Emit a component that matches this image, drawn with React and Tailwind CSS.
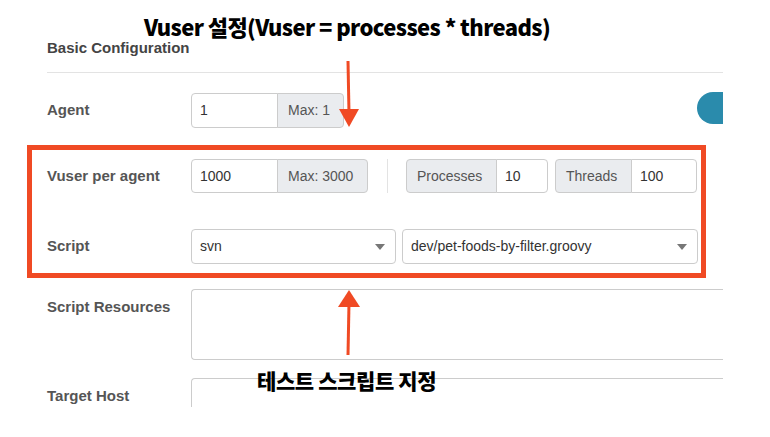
import React from 'react';

const label = 'w-[144px] shrink-0 text-[15px] font-bold text-[#555]';
const box = 'border border-[#ccc] bg-white text-[14px] text-[#333] px-[8px] flex items-center';
const addon = 'border border-[#ccc] bg-[#eaecef] text-[14px] text-[#555] px-[10px] flex items-center';

function Caret() {
  return (
    <svg width="10" height="6" viewBox="0 0 10 6" className="ml-auto">
      <path d="M0 0 L10 0 L5 6 Z" fill="#777" />
    </svg>
  );
}

function Arrow({ up }) {
  return (
    <svg width="26" height="66" viewBox="0 0 26 66" className="absolute" style={{ left: 336, top: up ? 289 : 61 }}>
      {up ? (
        <>
          <path d="M13 14 L12 66" stroke="#f04a24" strokeWidth="3" />
          <path d="M13 1 L24 18 L2 18 Z" fill="#f04a24" />
        </>
      ) : (
        <>
          <path d="M12 0 L13 52" stroke="#f04a24" strokeWidth="3" />
          <path d="M3 48 L23 48 L13 66 Z" fill="#f04a24" />
        </>
      )}
    </svg>
  );
}

export default function App() {
  const heavy = { fontFamily: '"Noto Sans CJK KR", "Noto Sans", sans-serif' };
  return (
    <div className="relative w-[770px] h-[437px] bg-white overflow-hidden" style={{ fontFamily: '"Liberation Sans", Arial, sans-serif' }}>
      <div className="w-[723px] h-[407px] overflow-hidden pl-[47px] pt-[39px]">
        <div className="text-[15px] font-bold text-[#444] leading-[18px]">Basic Configuration</div>
        <div className="h-px bg-[#e3e3e3] mt-[15px]" />

        <div className="flex items-center mt-[20px] h-[35px]">
          <div className={label}>Agent</div>
          <div className="flex h-[35px]">
            <div className={`${box} w-[87px] rounded-l-[4px]`}>1</div>
            <div className={`${addon} w-[67px] -ml-px rounded-r-[4px]`}>Max: 1</div>
          </div>
          <div className="ml-auto w-[26px] h-[32px] rounded-l-full bg-[#2a8bac] self-start mt-[-1px]" />
        </div>

        <div className="flex items-center mt-[31px] h-[34px]">
          <div className={label}>Vuser per agent</div>
          <div className="flex h-[34px]">
            <div className={`${box} w-[87px] rounded-l-[4px]`}>1000</div>
            <div className={`${addon} w-[91px] -ml-px rounded-r-[4px]`}>Max: 3000</div>
          </div>
          <div className="w-px h-[34px] bg-[#e3e3e3] ml-[19px] mr-[18px]" />
          <div className="flex h-[34px]">
            <div className={`${addon} w-[91px] rounded-l-[4px]`}>Processes</div>
            <div className={`${box} w-[52px] -ml-px rounded-r-[4px]`}>10</div>
          </div>
          <div className="flex h-[34px] ml-[7px]">
            <div className={`${addon} w-[77px] rounded-l-[4px]`}>Threads</div>
            <div className={`${box} w-[66px] -ml-px rounded-r-[4px]`}>100</div>
          </div>
        </div>

        <div className="flex items-center mt-[36px] h-[35px]">
          <div className={label}>Script</div>
          <div className={`${box} w-[205px] h-[35px] rounded-[4px] pr-[10px]`}>svn<Caret /></div>
          <div className={`${box} w-[296px] h-[35px] rounded-[4px] ml-[6px] pr-[10px]`}>dev/pet-foods-by-filter.groovy<Caret /></div>
        </div>

        <div className="flex mt-[25px]">
          <div className={`${label} pt-[7px]`}>Script Resources</div>
          <div className="flex-1 h-[71px] border border-[#ccc] rounded-l-[4px] border-r-0" />
        </div>

        <div className="flex mt-[18px]">
          <div className={`${label} pt-[7px]`}>Target Host</div>
          <div className="flex-1 h-[71px] border border-[#ccc] rounded-l-[4px] border-r-0" />
        </div>
      </div>

      <div className="absolute left-[27px] top-[145px] w-[679px] h-[133px] border-[5px] border-[#f04a24]" />
      <Arrow />
      <Arrow up />

      <div className="absolute left-[144px] top-[8px] text-[22px] font-black text-black tracking-[-0.6px] leading-[36px] whitespace-nowrap" style={heavy}>
        Vuser 설정(Vuser = processes * threads)
      </div>
      <div className="absolute left-[257px] top-[364px] text-[21px] font-black text-black tracking-[-0.4px] leading-[32px] whitespace-nowrap" style={heavy}>
        테스트 스크립트 지정
      </div>
    </div>
  );
}
